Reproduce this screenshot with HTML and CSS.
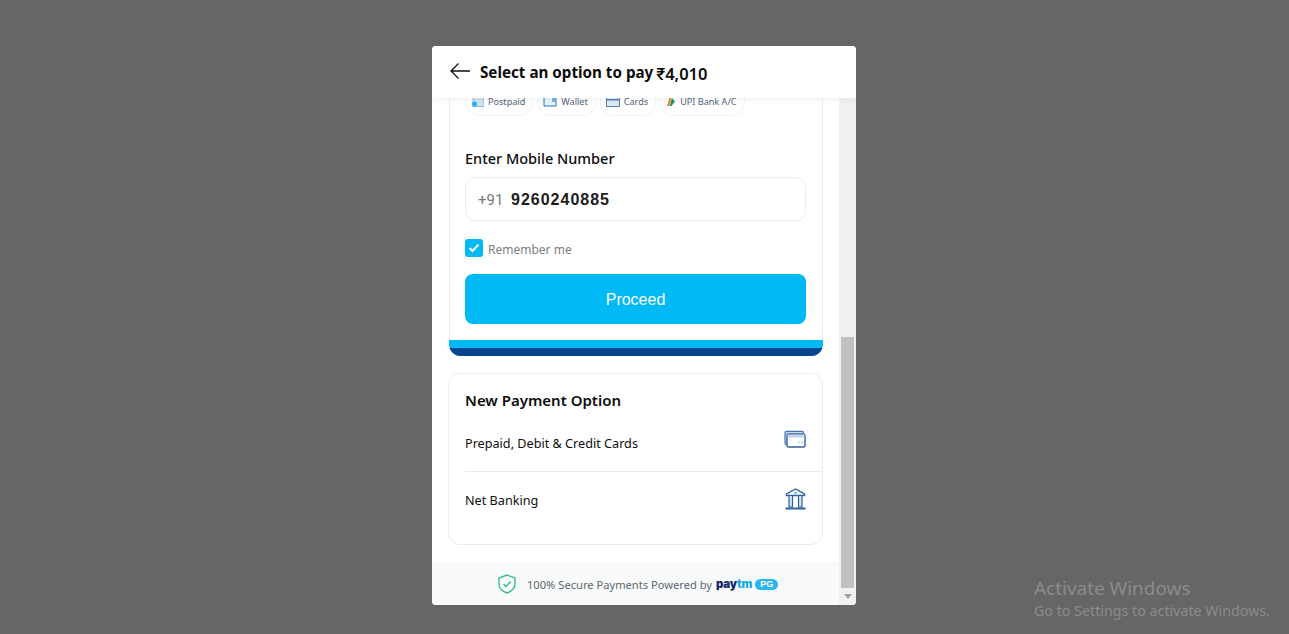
FILE: index.html
```html
<!DOCTYPE html>
<html lang="en">
<head>
    <meta charset="UTF-8">
    <meta name="viewport" content="width=device-width, initial-scale=1.0">
    <title>Select an option to pay</title>
    <link rel="stylesheet" href="styles.css">
</head>
<body>
    <div class="modal">
        <!-- Header -->
        <div class="modal-header">
            <svg class="back-icon" width="20" height="16" viewBox="0 0 20 16">
                <path d="M20 8H1M8.500 .5L1 8l7.500 7.500" fill="none" stroke="#111" stroke-width="1.300"/>
            </svg>
            <span class="header-title">Select an option to pay</span>
            <span class="header-amount"><span class="header-rupee">₹</span>4,010</span>
        </div>

        <div class="modal-main">
            <div class="modal-content">
                <div class="content-scroll">
                    <!-- Saved option card -->
                    <div class="option-card">
                        <div class="chips">
                            <div class="chip">
                                <svg width="12" height="10" viewBox="0 0 12 10">
                                    <rect x="1" y=".5" width="11" height="9" fill="#cfe3f2" stroke="#7fa5c9" stroke-width=".8"/>
                                    <circle cx="2.500" cy="7" r="2.500" fill="#1fb6f2"/>
                                </svg>
                                <span>Postpaid</span>
                            </div>
                            <div class="chip">
                                <svg width="14" height="10" viewBox="0 0 14 10">
                                    <path d="M1 1v8h12V1" fill="#e6f3fb" stroke="#2a72b5" stroke-width="1"/>
                                    <rect x="9" y="1" width="4" height="4" fill="#7fb4dc"/>
                                </svg>
                                <span>Wallet</span>
                            </div>
                            <div class="chip">
                                <svg width="14" height="10" viewBox="0 0 14 10">
                                    <rect x=".5" y=".5" width="13" height="9" fill="#dbe7f3" stroke="#5c82ad"/>
                                    <rect x="1" y="2" width="12" height="1.500" fill="#5c82ad"/>
                                </svg>
                                <span>Cards</span>
                            </div>
                            <div class="chip">
                                <svg width="10" height="10" viewBox="0 0 10 10">
                                    <path d="M1 9L3.500 1h2L3 9z" fill="#ee7a22"/>
                                    <path d="M3.500 9L6 1l3 3.500L5.500 9z" fill="#1f9a58"/>
                                </svg>
                                <span>UPI Bank A/C</span>
                            </div>
                        </div>

                        <div class="form-label">Enter Mobile Number</div>
                        <div class="mobile-input">
                            <span class="country-code">+91</span>
                            <span class="mobile-number">9260240885</span>
                        </div>

                        <div class="remember-row">
                            <div class="checkbox">
                                <svg width="12" height="10" viewBox="0 0 12 10">
                                    <path d="M1.500 5l3 3 6-6.500" fill="none" stroke="#fff" stroke-width="2"/>
                                </svg>
                            </div>
                            <span class="remember-text">Remember me</span>
                        </div>

                        <button class="btn-proceed">Proceed</button>
                        <div class="card-stripe"></div>
                    </div>

                    <!-- New payment options -->
                    <div class="new-option-card">
                        <div class="new-option-title">New Payment Option</div>
                        <div class="option-row first-row">
                            <span>Prepaid, Debit &amp; Credit Cards</span>
                            <svg class="row-icon" width="22" height="18" viewBox="0 0 22 18">
                                <path d="M3 14.500H2.500Q1 14.500 1 13V3q0-1.700 1.700-1.700H18q1.500 0 1.500 1.700" fill="#c9d9ea" stroke="#4a74ab" stroke-width="1.200"/>
                                <rect x="3" y="4" width="18" height="13" rx="1.500" fill="#fff" stroke="#2f609f" stroke-width="1.400"/>
                                <rect x="3.500" y="4.500" width="17" height="3" fill="#c3d4e8"/>
                                <circle cx="15" cy="12.500" r="1" fill="#9fe0f8"/>
                                <circle cx="18" cy="12.500" r="1" fill="#9fe0f8"/>
                            </svg>
                        </div>
                        <div class="option-row last-row">
                            <span class="net-banking">Net Banking</span>
                            <svg class="row-icon" width="21" height="22" viewBox="0 0 21 22">
                                <path d="M10.500 1L1.500 6v1.500h18V6z" fill="#fff" stroke="#2f609f" stroke-width="1.400"/>
                                <circle cx="10.500" cy="5" r="1.200" fill="#3cc0f2"/>
                                <path d="M4 8v11h3.500V8M13.500 8v11H17V8" fill="#d5e2f0" stroke="#2f609f" stroke-width="1.200"/>
                                <path d="M.5 20.500h20" stroke="#2f609f" stroke-width="2"/>
                            </svg>
                        </div>
                    </div>
                </div>

                <!-- Footer -->
                <div class="secure-footer">
                    <svg width="18" height="20" viewBox="0 0 18 20">
                        <path d="M9 1l8 3v6q0 6-8 9-8-3-8-9V4z" fill="none" stroke="#35c08a" stroke-width="1.400"/>
                        <path d="M5.500 10l2.500 2.500 4.500-5" fill="none" stroke="#35c08a" stroke-width="1.400"/>
                    </svg>
                    <span class="secure-text">100% Secure Payments Powered by</span>
                    <span class="paytm-logo"><b>pay</b><i>tm</i></span>
                    <span class="pg-badge">PG</span>
                </div>
            </div>

            <!-- Scrollbar -->
            <div class="scroll-track">
                <div class="scroll-thumb"></div>
                <div class="scroll-arrow"></div>
            </div>
        </div>
    </div>

    <div class="activate-note">
        <div class="activate-title">Activate Windows</div>
        <div class="activate-text">Go to Settings to activate Windows.</div>
    </div>
</body>
</html>
```

FILE: styles.css
```css
html, body {
    height: 100%;
}
body {
    font-family: "Noto Sans", Arial, sans-serif;
    background-color: #666;
    margin: 0;
    padding: 46px 0 0 432px;
    box-sizing: border-box;
    overflow: hidden;
}
.modal {
    width: 424px;
    height: 559px;
    background-color: #fff;
    border-radius: 4px;
    overflow: hidden;
    display: flex;
    flex-direction: column;
}
.modal-header {
    height: 52px;
    flex: none;
    display: flex;
    align-items: center;
    padding-left: 18px;
    background-color: #fff;
    box-shadow: 0 2px 6px rgba(0, 0, 0, 0.05);
    position: relative;
    z-index: 2;
}
.back-icon {
    margin: 0 10px 2px 0;
}
.header-title {
    font-size: 15.200px;
    font-weight: 700;
    color: #0b0b0b;
}
.header-amount {
    font-size: 16.500px;
    font-weight: 600;
    color: #0b0b0b;
    margin: 2px 0 0 3px;
}
.header-rupee {
    font-family: Roboto, Arial, sans-serif;
    font-size: 17px;
    font-weight: 500;
}
.modal-main {
    flex: 1;
    display: flex;
    min-height: 0;
}
.modal-content {
    width: 407px;
    display: flex;
    flex-direction: column;
}
.content-scroll {
    flex: 1;
    overflow: hidden;
    padding-left: 16px;
}
.option-card {
    width: 374px;
    box-sizing: border-box;
    margin-left: 1px;
    padding-left: 16px;
    box-shadow: inset 1px 0 0 #e8edf3, inset -1px 0 0 #e8edf3;
    border-radius: 0 0 12px 12px;
    overflow: hidden;
}
.chips {
    display: flex;
    gap: 4px;
    padding-left: 1px;
}
/* only the lower part of each pill shows under the header */
.chip {
    height: 18px;
    box-sizing: border-box;
    display: flex;
    align-items: flex-start;
    gap: 4px;
    padding: 0 7px 0 5px;
    border: 1px solid #f1f3f6;
    border-top: none;
    border-radius: 0 0 14px 14px;
    font-size: 9.100px;
    line-height: 8px;
    color: #53657b;
}
.chip svg {
    margin-top: -1px;
}
.form-label {
    margin-top: 31px;
    font-size: 14.500px;
    font-weight: 500;
    line-height: 22px;
    color: #0b0b0b;
}
.mobile-input {
    width: 341px;
    height: 44px;
    margin-top: 8px;
    box-sizing: border-box;
    display: flex;
    align-items: center;
    padding-left: 12px;
    border: 1px solid #e8edf3;
    border-radius: 10px;
    font-family: Roboto, Arial, sans-serif;
    font-size: 16px;
}
.country-code {
    color: #77777d;
    width: 33px;
    font-size: 15px;
    margin-top: 1px;
}
.mobile-number {
    font-family: "Liberation Sans", Arial, sans-serif;
    font-weight: 700;
    letter-spacing: 1px;
    color: #1c1c1c;
    margin-top: 1px;
}
.remember-row {
    height: 18px;
    display: flex;
    align-items: center;
    gap: 5px;
    margin-top: 18px;
    font-size: 12px;
    line-height: 16px;
    color: #7d7d82;
}
.remember-text {
    margin-top: 4px;
}
.checkbox {
    width: 18px;
    height: 18px;
    border-radius: 3px;
    background-color: #00b9f5;
    display: flex;
    align-items: center;
    justify-content: center;
}
.btn-proceed {
    display: block;
    width: 341px;
    height: 50px;
    margin-top: 17px;
    padding: 2px 0 0;
    border: none;
    border-radius: 8px;
    background-color: #00b9f5;
    color: #fff;
    font-family: "Liberation Sans", Arial, sans-serif;
    font-size: 16px;
}
.card-stripe {
    height: 8px;
    margin: 16px 0 0 -16px;
    background-color: #00b9f5;
    border-bottom: 8px solid #04458f;
}
.new-option-card {
    width: 375px;
    height: 172px;
    box-sizing: border-box;
    margin-top: 17px;
    padding-top: 16px;
    border: 1px solid #e8ebf0;
    border-radius: 12px;
}
.new-option-title {
    margin-left: 16px;
    font-size: 15px;
    font-weight: 600;
    line-height: 20px;
    color: #0f0f0f;
}
.option-row {
    margin-left: 16px;
    padding-right: 16px;
    display: flex;
    align-items: center;
    justify-content: space-between;
    font-size: 12.650px;
    color: #101010;
}
.first-row {
    height: 56px;
    margin-top: 5px;
    border-bottom: 1px solid #e8ebf0;
}
.last-row {
    height: 57px;
}
.net-banking {
    margin-bottom: 2px;
}
.row-icon {
    margin-bottom: 9px;
}
.last-row .row-icon {
    margin-bottom: 4px;
}
.secure-footer {
    height: 43px;
    flex: none;
    display: flex;
    align-items: center;
    padding-left: 66px;
    background-color: #f8fbfa;
}
.secure-text {
    margin: 2px 0 0 11px;
    font-size: 11.150px;
    color: #5f6670;
}
.paytm-logo {
    margin: 1px 0 0 4px;
    font-family: Inter, Arial, sans-serif;
    font-size: 11.500px;
    font-weight: 900;
    letter-spacing: -0.2px;
}
.paytm-logo b {
    color: #12296b;
    font-weight: 900;
}
.paytm-logo i {
    color: #17a9e6;
    font-style: normal;
}
.pg-badge {
    width: 23px;
    height: 11px;
    margin: 1px 0 0 3px;
    border-radius: 6px;
    background-color: #2bb5f0;
    color: #fff;
    font-family: "Liberation Sans", Arial, sans-serif;
    font-size: 9px;
    font-weight: 700;
    line-height: 11px;
    text-align: center;
}
.scroll-track {
    width: 17px;
    background-color: #f1f1f1;
    display: flex;
    flex-direction: column;
    align-items: center;
    padding-top: 239px;
    box-sizing: border-box;
}
.scroll-thumb {
    width: 13px;
    height: 251px;
    background-color: #c1c1c1;
}
.scroll-arrow {
    width: 0;
    height: 0;
    margin-top: 6px;
    border-left: 4px solid transparent;
    border-right: 4px solid transparent;
    border-top: 5px solid #a3a3a3;
}
/* Windows watermark sits over the page */
.activate-note {
    position: absolute;
    left: 1034px;
    top: 575px;
    color: #8b8b8b;
}
.activate-title {
    font-size: 18.950px;
    line-height: 26px;
}
.activate-text {
    font-size: 14.250px;
    line-height: 20px;
}
```
